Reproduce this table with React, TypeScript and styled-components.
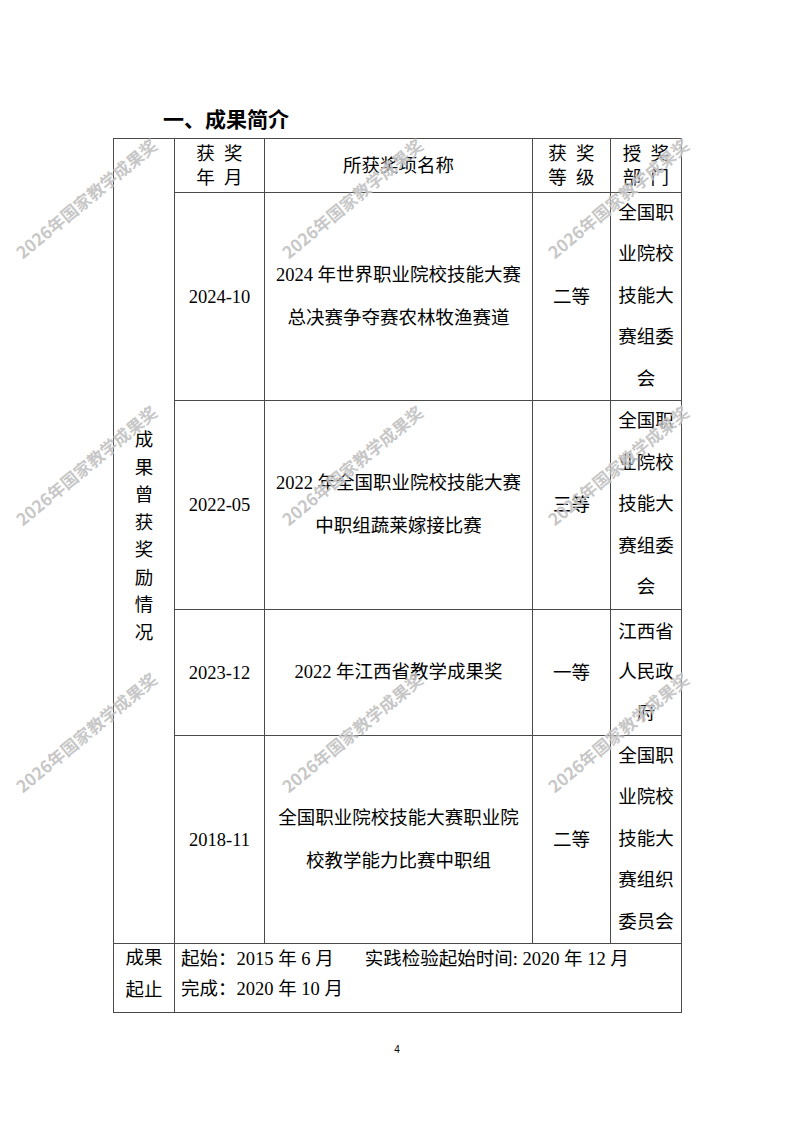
import React from 'react';
import styled, { createGlobalStyle } from 'styled-components';

const Global = createGlobalStyle`
  html, body { margin: 0; padding: 0; background: #fff; }
  body { font-family: "Liberation Serif", "Noto Sans CJK SC", serif; color: #000; }
`;

const Page = styled.div`
  position: relative;
  width: 794px;
  height: 1123px;
  overflow: hidden;
  box-sizing: border-box;
  padding-top: 103px;
  display: flex;
  flex-direction: column;
`;

const Heading = styled.h1`
  margin: 0 0 5px 163px;
  font: 700 21px/30px "Noto Sans CJK SC", sans-serif;
  color: #000;
`;

const Grid = styled.div`
  margin-left: 113px;
  display: grid;
  grid-template-columns: 60px 89px 267px 77px 70px;
  grid-template-rows: 53px 207px 208px 125px 207px 68px;
  gap: 1px;
  background: #4a4a4a;
  border: 1px solid #4a4a4a;
  width: max-content;
`;

type CellProps = {
  $lh?: number;
  $left?: boolean;
  $top?: boolean;
  $col?: string;
  $row?: string;
  $pb?: number;
  $pl?: number;
};

const Cell = styled.div<CellProps>`
  background: #fff;
  display: flex;
  flex-direction: column;
  justify-content: ${(p) => (p.$top ? 'flex-start' : 'center')};
  align-items: ${(p) => (p.$left ? 'flex-start' : 'center')};
  text-align: ${(p) => (p.$left ? 'left' : 'center')};
  font-size: 18.5px;
  line-height: ${(p) => p.$lh ?? 42}px;
  grid-column: ${(p) => p.$col ?? 'auto'};
  grid-row: ${(p) => p.$row ?? 'auto'};
  padding-bottom: ${(p) => p.$pb ?? 0}px;
  padding-left: ${(p) => p.$pl ?? 0}px;
  box-sizing: border-box;
  overflow: hidden;
`;

const Line = styled.span`
  display: block;
  white-space: nowrap;
`;

const Gap = styled.span<{ $w: number }>`
  display: inline-block;
  width: ${(p) => p.$w}px;
`;

const PageNum = styled.div`
  margin-top: 30px;
  width: 100%;
  text-align: center;
  font: 10px/14px "Liberation Sans", "Noto Sans CJK SC", sans-serif;
`;

const Watermark = styled.div<{ $x: number; $y: number }>`
  position: absolute;
  left: ${(p) => p.$x}px;
  top: ${(p) => p.$y}px;
  transform: translate(-50%, -50%) rotate(-39.5deg);
  white-space: nowrap;
  font: 700 17px/1 "Noto Sans CJK SC", sans-serif;
  color: rgba(150, 150, 150, 0.55);
  text-shadow: 0 0 1px rgba(255, 255, 255, 0.9);
  pointer-events: none;
  z-index: 2;
`;

const Lines: React.FC<{ lines: string[] }> = ({ lines }) => (
  <>
    {lines.map((l, i) => (
      <Line key={i}>{l}</Line>
    ))}
  </>
);

type Award = {
  date: string;
  name: string[];
  level: string;
  dept: string[];
  deptLh: number;
};

const awards: Award[] = [
  {
    date: '2024-10',
    name: ['2024 年世界职业院校技能大赛', '总决赛争夺赛农林牧渔赛道'],
    level: '二等',
    dept: ['全国职', '业院校', '技能大', '赛组委', '会'],
    deptLh: 41.5,
  },
  {
    date: '2022-05',
    name: ['2022 年全国职业院校技能大赛', '中职组蔬莱嫁接比赛'],
    level: '三等',
    dept: ['全国职', '业院校', '技能大', '赛组委', '会'],
    deptLh: 41.5,
  },
  {
    date: '2023-12',
    name: ['2022 年江西省教学成果奖'],
    level: '一等',
    dept: ['江西省', '人民政', '府'],
    deptLh: 40.5,
  },
  {
    date: '2018-11',
    name: ['全国职业院校技能大赛职业院', '校教学能力比赛中职组'],
    level: '二等',
    dept: ['全国职', '业院校', '技能大', '赛组织', '委员会'],
    deptLh: 41.5,
  },
];

const marks: [number, number][] = [];
[198, 465, 732].forEach((y) => [86, 352, 618].forEach((x) => marks.push([x, y])));

export default function App() {
  return (
    <Page>
      <Global />
      <Heading>一、成果简介</Heading>
      <Grid>
        <Cell $row="1 / 6" $lh={27.5} $pb={8}>
          <Lines lines={['成', '果', '曾', '获', '奖', '励', '情', '况']} />
        </Cell>
        <Cell $lh={24}>
          <Lines lines={['获\u2002奖', '年\u2002月']} />
        </Cell>
        <Cell $lh={24}>
          <Line>所获奖项名称</Line>
        </Cell>
        <Cell $lh={24}>
          <Lines lines={['获\u2002奖', '等\u2002级']} />
        </Cell>
        <Cell $lh={24}>
          <Lines lines={['授\u2002奖', '部\u2002门']} />
        </Cell>
        {awards.map((a) => (
          <React.Fragment key={a.date}>
            <Cell>
              <Line>{a.date}</Line>
            </Cell>
            <Cell $lh={43}>
              <Lines lines={a.name} />
            </Cell>
            <Cell>
              <Line>{a.level}</Line>
            </Cell>
            <Cell $lh={a.deptLh}>
              <Lines lines={a.dept} />
            </Cell>
          </React.Fragment>
        ))}
        <Cell $lh={32} $pb={8}>
          <Lines lines={['成果', '起止']} />
        </Cell>
        <Cell $col="2 / 6" $left $top $lh={30} $pl={6}>
          <Line>
            起始：2015 年 6 月<Gap $w={31} />实践检验起始时间: 2020 年 12 月
          </Line>
          <Line>完成：2020 年 10 月</Line>
        </Cell>
      </Grid>
      <PageNum>4</PageNum>
      {marks.map(([x, y], i) => (
        <Watermark key={i} $x={x} $y={y}>
          2026年国家教学成果奖
        </Watermark>
      ))}
    </Page>
  );
}
